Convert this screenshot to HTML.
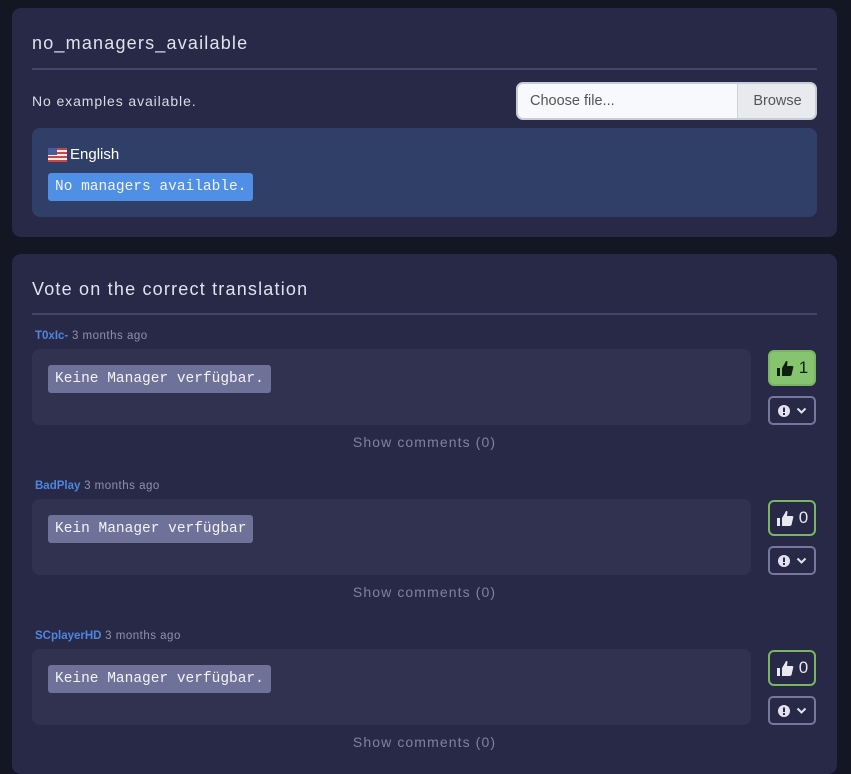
<!DOCTYPE html>
<html><head><style>
*{box-sizing:border-box;margin:0;padding:0}
body{width:851px;height:765px;background:#151624;font-family:"Liberation Sans",sans-serif;color:#e4e4ee;position:relative;overflow:hidden}
.card{position:absolute;left:12px;width:825px;background:#272946;border-radius:9px}
.abs{position:absolute}
.h{font-size:18px;color:#e2e1ee;letter-spacing:1.2px}
.line{position:absolute;left:20px;width:785px;height:2px;background:#43456a}
.mono{font-family:"Liberation Mono","DejaVu Sans Mono",monospace;font-size:14.5px}
.code{position:absolute;border-radius:3px;padding:0 7px;line-height:28px;color:#f3f3f8}
.box{position:absolute;left:20px;width:719px;height:76px;background:#30324f;border-radius:8px}
.user{position:absolute;left:23px;font-size:11.5px;color:#8f91ad;letter-spacing:0.5px}
.user b{color:#4f86e0;font-weight:bold;letter-spacing:0}
.sc{position:absolute;left:20px;width:785px;text-align:center;font-size:14px;color:#80829e;letter-spacing:1.1px}
.vote{position:absolute;left:756px;width:48px;height:36px;border:2px solid #7ab564;border-radius:6px;display:flex;align-items:center;justify-content:center;gap:5px;font-size:17px;color:#e8e8f0}
.dd{position:absolute;left:756px;width:48px;height:29px;border:2px solid #75789c;border-radius:5px;display:flex;align-items:center;justify-content:center;gap:6px}
</style></head><body>
<div class="card" style="top:8px;height:229px">
  <div class="abs h" style="left:20px;top:25px">no_managers_available</div>
  <div class="line" style="top:60px"></div>
  <div class="abs" style="left:20px;top:85px;font-size:14px;color:#dcdce8;letter-spacing:0.9px">No examples available.</div>
  <div class="abs" style="left:504px;top:74px;width:301px;height:38px;background:#f8f9fd;border:2px solid #c9ccd8;border-radius:7px;overflow:hidden">
    <div class="abs" style="left:12px;top:9px;font-size:14.5px;color:#555">Choose file...</div>
    <div class="abs" style="left:219px;top:0;width:80px;height:34px;background:#e8eaee;border-left:1px solid #cfd2da;font-size:14.5px;color:#555;line-height:34px;text-align:center">Browse</div>
  </div>
  <div class="abs" style="left:20px;top:120px;width:785px;height:89px;background:#303f67;border-radius:8px">
    <div class="abs" style="left:16px;top:20px;width:19px;height:14px;background:repeating-linear-gradient(#c44 0 2px,#eee 2px 4px)"><div style="width:9px;height:7px;background:#4a5a9a"></div></div>
    <div class="abs" style="left:38px;top:18px;font-size:15px;color:#fff">English</div>
    <div class="code mono" style="left:16px;top:45px;background:#4f8fe6">No managers available.</div>
  </div>
</div>
<div class="card" style="top:254px;height:520px">
  <div class="abs h" style="left:20px;top:25px">Vote on the correct translation</div>
  <div class="line" style="top:59px"></div>

  <div class="user" style="top:76px"><b>T0xIc-</b> 3 months ago</div>
  <div class="box" style="top:95px"><div class="code mono" style="left:16px;top:16px;background:#6e7299">Keine Manager verfügbar.</div></div>
  <div class="vote" style="top:96px;background:#86c46f;color:#102010">
    <svg width="18" height="17" viewBox="0 0 18 17"><rect x="1" y="8" width="3" height="8" fill="#102010"/><path d="M6 8 L9 3 Q10 0 11.5 1.5 L11 6 H16 Q18 6 17 8.5 L15.5 15 Q15 16 13.5 16 H6 Z" fill="#102010"/></svg><span>1</span></div>
  <div class="dd" style="top:142px"><svg width="12" height="12"><circle cx="6" cy="6" r="6" fill="#e2e2ee"/><rect x="5" y="2.5" width="2" height="4.5" fill="#272946"/><rect x="5" y="8" width="2" height="2" fill="#272946"/></svg><svg width="11" height="8"><path d="M1.5 1.5 L5.5 5.5 L9.5 1.5" stroke="#e2e2ee" stroke-width="2" fill="none"/></svg></div>
  <div class="sc" style="top:180px">Show comments (0)</div>

  <div class="user" style="top:226px"><b>BadPlay</b> 3 months ago</div>
  <div class="box" style="top:245px"><div class="code mono" style="left:16px;top:16px;background:#6e7299">Kein Manager verfügbar</div></div>
  <div class="vote" style="top:246px">
    <svg width="18" height="17" viewBox="0 0 18 17"><rect x="1" y="8" width="3" height="8" fill="#e8e8f0"/><path d="M6 8 L9 3 Q10 0 11.5 1.5 L11 6 H16 Q18 6 17 8.5 L15.5 15 Q15 16 13.5 16 H6 Z" fill="#e8e8f0"/></svg><span>0</span></div>
  <div class="dd" style="top:292px"><svg width="12" height="12"><circle cx="6" cy="6" r="6" fill="#e2e2ee"/><rect x="5" y="2.5" width="2" height="4.5" fill="#272946"/><rect x="5" y="8" width="2" height="2" fill="#272946"/></svg><svg width="11" height="8"><path d="M1.5 1.5 L5.5 5.5 L9.5 1.5" stroke="#e2e2ee" stroke-width="2" fill="none"/></svg></div>
  <div class="sc" style="top:330px">Show comments (0)</div>

  <div class="user" style="top:376px"><b>SCplayerHD</b> 3 months ago</div>
  <div class="box" style="top:395px"><div class="code mono" style="left:16px;top:16px;background:#6e7299">Keine Manager verfügbar.</div></div>
  <div class="vote" style="top:396px">
    <svg width="18" height="17" viewBox="0 0 18 17"><rect x="1" y="8" width="3" height="8" fill="#e8e8f0"/><path d="M6 8 L9 3 Q10 0 11.5 1.5 L11 6 H16 Q18 6 17 8.5 L15.5 15 Q15 16 13.5 16 H6 Z" fill="#e8e8f0"/></svg><span>0</span></div>
  <div class="dd" style="top:442px"><svg width="12" height="12"><circle cx="6" cy="6" r="6" fill="#e2e2ee"/><rect x="5" y="2.5" width="2" height="4.5" fill="#272946"/><rect x="5" y="8" width="2" height="2" fill="#272946"/></svg><svg width="11" height="8"><path d="M1.5 1.5 L5.5 5.5 L9.5 1.5" stroke="#e2e2ee" stroke-width="2" fill="none"/></svg></div>
  <div class="sc" style="top:480px">Show comments (0)</div>
</div>
</body></html>
